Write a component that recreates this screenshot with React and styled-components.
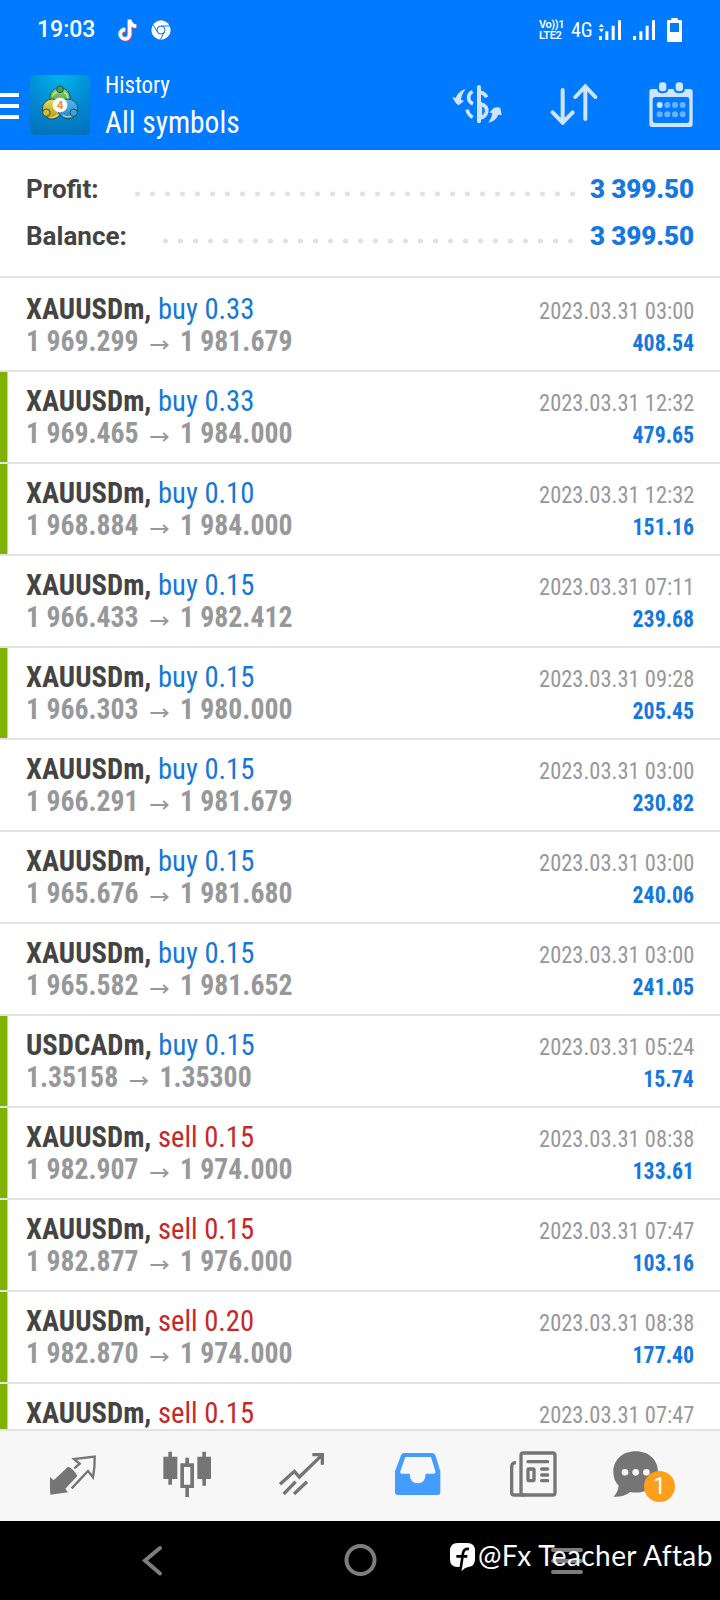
import styled, { createGlobalStyle } from "styled-components"

const GlobalStyle = createGlobalStyle`
* { box-sizing: border-box; }
body {
margin: 0;
background: #fff;
font-family: "Roboto Condensed", Roboto, "Liberation Sans", sans-serif;
}
`

const deals = [
    { symbol: "XAUUSDm", type: "buy", volume: "0.33", open: "1 969.299", close: "1 981.679", date: "2023.03.31 03:00", profit: "408.54" },
    { symbol: "XAUUSDm", type: "buy", volume: "0.33", open: "1 969.465", close: "1 984.000", date: "2023.03.31 12:32", profit: "479.65", marked: true },
    { symbol: "XAUUSDm", type: "buy", volume: "0.10", open: "1 968.884", close: "1 984.000", date: "2023.03.31 12:32", profit: "151.16", marked: true },
    { symbol: "XAUUSDm", type: "buy", volume: "0.15", open: "1 966.433", close: "1 982.412", date: "2023.03.31 07:11", profit: "239.68" },
    { symbol: "XAUUSDm", type: "buy", volume: "0.15", open: "1 966.303", close: "1 980.000", date: "2023.03.31 09:28", profit: "205.45", marked: true },
    { symbol: "XAUUSDm", type: "buy", volume: "0.15", open: "1 966.291", close: "1 981.679", date: "2023.03.31 03:00", profit: "230.82" },
    { symbol: "XAUUSDm", type: "buy", volume: "0.15", open: "1 965.676", close: "1 981.680", date: "2023.03.31 03:00", profit: "240.06" },
    { symbol: "XAUUSDm", type: "buy", volume: "0.15", open: "1 965.582", close: "1 981.652", date: "2023.03.31 03:00", profit: "241.05" },
    { symbol: "USDCADm", type: "buy", volume: "0.15", open: "1.35158", close: "1.35300", date: "2023.03.31 05:24", profit: "15.74", marked: true },
    { symbol: "XAUUSDm", type: "sell", volume: "0.15", open: "1 982.907", close: "1 974.000", date: "2023.03.31 08:38", profit: "133.61", marked: true },
    { symbol: "XAUUSDm", type: "sell", volume: "0.15", open: "1 982.877", close: "1 976.000", date: "2023.03.31 07:47", profit: "103.16", marked: true },
    { symbol: "XAUUSDm", type: "sell", volume: "0.20", open: "1 982.870", close: "1 974.000", date: "2023.03.31 08:38", profit: "177.40", marked: true },
    { symbol: "XAUUSDm", type: "sell", volume: "0.15", date: "2023.03.31 07:47", marked: true },
]

const Screen = styled.div`
width: 720px;
height: 1600px;
display: flex;
flex-direction: column;
overflow: hidden;
background: #fff;
`

const Header = styled.header`
flex: none;
height: 150px;
background: #007aff;
border-bottom: 1px solid #1a6fd0;
color: #fff;
`

const StatusBar = styled.div`
height: 60px;
padding: 0 38px 0 37px;
display: flex;
align-items: center;
font-family: Roboto, sans-serif;
`

const Clock = styled.div`
width: 80px;
font-size: 23px;
font-weight: 500;
line-height: 62px;
`

const StatusIcons = styled.div`
display: flex;
align-items: center;
gap: ${({ $gap }) => $gap}px;
`

const StatusRight = styled(StatusIcons)`
margin-left: auto;
`

const VoLte = styled.div`
display: flex;
flex-direction: column;
font-size: 11px;
line-height: 11px;
font-weight: 600;
white-space: nowrap;
width: 25px;
& span { letter-spacing: -0.4px; }
`

const Network = styled.div`
font-size: 20px;
line-height: 24px;
width: 22px;
margin-left: 7px;
margin-right: 6px;
font-stretch: 75%;
`

const AppBar = styled.div`
height: 89px;
padding: 14px 26px 0 0;
display: flex;
align-items: flex-start;
`

const MenuButton = styled.div`
width: 19px;
margin-top: 19px;
display: flex;
flex-direction: column;
gap: 7px;
& i {
height: 4px;
background: #fff;
}
`

const Logo = styled.div`
width: 60px;
height: 60px;
margin: 1px 15px 0 11px;
border-radius: 5px;
background: radial-gradient(circle at 50% 0, #00b4ea, #0387d0 55%, #036fb8);
`

const Titles = styled.div`
width: 230px;
white-space: nowrap;
font-stretch: 75%;
`

const SmallTitle = styled.div`
font-size: 24px;
line-height: 22px;
transform: scaleX(0.955);
transform-origin: left;
`

const BigTitle = styled.div`
font-size: 32px;
line-height: 52px;
transform: scaleX(0.92);
transform-origin: left;
`

const Actions = styled.div`
margin-left: auto;
display: flex;
align-items: center;
gap: 48px;
height: 60px;
`

const Summary = styled.section`
flex: none;
height: 128px;
padding: 15px 26px 0;
border-bottom: 2px solid #e3e3e3;
`

const SummaryLine = styled.div`
height: 47px;
display: flex;
align-items: center;
font-family: Roboto, sans-serif;
font-size: 26px;
font-weight: 700;
color: #444;
& strong {
width: 104px;
white-space: nowrap;
letter-spacing: -0.1px;
color: #1677e0;
}
`

const Dots = styled.div`
flex: 1;
height: 6px;
margin: 10px 11px 0 36px;
background: radial-gradient(circle at 2.5px 3px, #e2e2e2 2.1px, transparent 2.9px) 0 0 / 15px 6px;
`

const List = styled.main`
flex: 1;
min-height: 0;
overflow: hidden;
`

const Row = styled.article`
height: 92px;
padding: 13px 26px 0;
background:
linear-gradient(#e3e3e3, #e3e3e3) bottom left / 100% 2px no-repeat,
linear-gradient(90deg, ${({ $marked }) => ($marked ? "#7db300 7px, #c3dd85 7px" : "#fff, #fff")}) left / 8px 100% no-repeat;
&:first-child {
height: 94px;
padding-top: 15px;
}
`

const Line = styled.div`
height: 32px;
line-height: 32px;
display: flex;
align-items: baseline;
justify-content: space-between;
white-space: nowrap;
font-stretch: 75%;
`

const Deal = styled.div`
font-size: 29.5px;
color: ${({ $type }) => ($type === "sell" ? "#c62828" : "#1677d8")};
transform: scaleX(0.97);
transform-origin: left;
& b { color: #444; }
`

const Prices = styled.div`
font-size: 29.5px;
font-weight: 700;
color: #97989b;
transform: scaleX(0.94);
transform-origin: left;
& svg { margin: 0 12px; }
`

const DateText = styled.div`
font-size: 24.5px;
color: #97989b;
transform: scaleX(0.917);
transform-origin: right;
`

const Profit = styled.div`
font-size: 24.5px;
font-weight: 700;
color: #1677e0;
transform: scaleX(0.89);
transform-origin: right;
`

const TabBar = styled.nav`
flex: none;
height: 92px;
border-top: 2px solid #e3e3e3;
background: #f7f7f7;
display: grid;
grid-template-columns: 145px 84px 146px 85px 146px 60px;
color: #757575;
& svg { display: block; }
`

const Tab = styled.div`
position: relative;
padding-top: 19px;
display: flex;
justify-content: center;
align-items: flex-start;
`

const Badge = styled.span`
position: absolute;
top: 40px;
left: 38px;
width: 31px;
height: 31px;
border-radius: 50%;
background: #ff9f1c;
color: #fff;
font: 400 23px/32px Roboto, sans-serif;
text-align: center;
`

const SystemBar = styled.footer`
flex: none;
position: relative;
height: 79px;
background: #000;
display: flex;
align-items: center;
& > svg { flex: none; }
`

const Watermark = styled.div`
position: absolute;
left: 450px;
top: 16px;
display: flex;
align-items: center;
gap: 3px;
color: #fff;
font: 400 28px/36px Lato, sans-serif;
letter-spacing: 0.4px;
white-space: nowrap;
& svg { margin-top: 3px; }
`

const TikTok = () => (
    <svg width="21" height="25" viewBox="0 0 63 75">
        <g fill="none" strokeWidth="10">
            <path stroke="#24e6f0" d="M36 4v44a14 14 0 1 1-13-15M37 7c2 11 8 16 18 18" />
            <path stroke="#f7345c" d="M41 8v44a14 14 0 1 1-13-14M42 10c2 11 9 16 19 16" />
            <path stroke="#fff" strokeWidth="11" d="M38 5v45a14 14 0 1 1-13-15M39 8c2 11 9 16 19 17" />
        </g>
    </svg>
)

const Chrome = () => (
    <svg width="20" height="20" viewBox="0 0 60 60">
        <circle cx="30" cy="30" r="29" fill="#fff" />
        <g fill="none" stroke="#007aff" strokeWidth="3">
            <circle cx="30" cy="30" r="12" />
            <path d="M30 18h27M20 37L6 14M40 36L28 59" />
        </g>
    </svg>
)

const Signal = ({ data }) => (
    <svg width="22" height="20" viewBox="0 0 66 60" fill="#fff">
        <path d="M0 48h9v12H0zM19 34h9v26h-9zM38 17h9v43h-9zM57 1h9v59h-9z" />
        {data && <path d="M7 11l8 10H-1zM7 37l8-11H-1z" />}
    </svg>
)

const Battery = () => (
    <svg width="15" height="24" viewBox="0 0 45 72">
        <path fill="#fff" fillRule="evenodd" d="M13 0h19v6h9q4 0 4 4v58q0 4-4 4H4q-4 0-4-4V10q0-4 4-4h9zM9 15v27h27V15z" />
    </svg>
)

const LogoMark = () => (
    <svg width="60" height="60" viewBox="0 0 180 180">
        <defs>
            <linearGradient id="green" x2="0" y2="1"><stop stopColor="#9ed86c" /><stop offset="1" stopColor="#2f8f3c" /></linearGradient>
            <linearGradient id="gold" x2="0" y2="1"><stop stopColor="#e6dc62" /><stop offset="1" stopColor="#b99418" /></linearGradient>
            <linearGradient id="sky" x2="0" y2="1"><stop stopColor="#57b9ee" /><stop offset="1" stopColor="#2383cf" /></linearGradient>
        </defs>
        <g stroke="#1c5560" strokeWidth="3">
            <circle cx="90" cy="69" r="31" fill="url(#green)" />
            <circle cx="67" cy="102" r="30" fill="url(#gold)" />
            <circle cx="114" cy="102" r="30" fill="url(#sky)" />
            <circle cx="90" cy="43" r="10" fill="#4ba33c" />
            <circle cx="49" cy="113" r="11" fill="#d4bd35" />
            <circle cx="131" cy="113" r="11" fill="#3ca0e0" />
        </g>
        <path d="M68 64q5-12 14-12M103 52q10 6 11 18M58 127q17 3 25-8M98 120q13 9 26 3" stroke="#e9f5cf" strokeWidth="4" fill="none" opacity=".7" />
        <circle cx="90" cy="90" r="22" fill="#fff" stroke="#d9d6c8" strokeWidth="1" />
        <text x="90" y="102" textAnchor="middle" fontFamily="Roboto" fontWeight="700" fontSize="35" fill="#f08a3c">4</text>
    </svg>
)

const CurrencyIcon = () => (
    <svg width="50" height="40" viewBox="96 252 150 120" fill="none" stroke="#cfe4ff" strokeWidth="11">
        <path strokeWidth="12" strokeLinecap="round" d="M177 261v103" />
        <path d="M181 277q13 2 19 15M158 275q-12 5-12 18t13 18M141 329q4 16 17 23M181 311q22 6 19 24-3 15-19 19M181 315v36" />
        <path fill="#cfe4ff" stroke="none" d="M97 290l10 4q8-21 30-27-13 17-14 32l9 4-16 13q-12-8-19-26zM245 346l-4-23q-12-4-21 2l-12 13 9 1q-2 17-13 29 24-5 31-24z" />
    </svg>
)

const SortIcon = () => (
    <svg width="50" height="42" viewBox="390 249 150 126" fill="none" stroke="#cfe4ff" strokeWidth="12" strokeLinecap="round">
        <path d="M428 270v98M398 337l30 31 30-31M496 357v-97M466 291l30-32 30 32" />
    </svg>
)

const CalendarIcon = () => (
    <svg width="46" height="47" viewBox="684 240 138 141" fill="#cfe4ff">
        <path fillRule="evenodd" d="M696 264h15q1 13 17 13t17-13h16q1 13 17 13t17-13h15q8 0 8 8v98q0 8-8 8H696q-8 0-8-8v-98q0-8 8-8zM706 288q-8 0-8 8v61q0 9 8 9h94q8 0 8-9v-61q0-8-8-8z" />
        <rect x="717" y="244" width="22" height="27" rx="9" />
        <rect x="767" y="244" width="22" height="27" rx="9" />
        <circle cx="719" cy="312" r="9" />
        <g fill="#6db2ff">
            <circle cx="742" cy="312" r="9" /><circle cx="765" cy="312" r="9" /><circle cx="788" cy="312" r="9" />
            <circle cx="719" cy="340" r="9" /><circle cx="742" cy="340" r="9" /><circle cx="765" cy="340" r="9" /><circle cx="788" cy="340" r="9" />
        </g>
    </svg>
)

const PriceArrow = () => (
    <svg width="20" height="12" viewBox="0 0 60 36">
        <path d="M1 18h55M42 6l14 12-14 12" fill="none" stroke="#97989b" strokeWidth="6" />
    </svg>
)

const QuotesIcon = () => (
    <svg width="48" height="48" viewBox="146 90 144 144">
        <path fill="currentColor" d="M149 171l11 10 43-41q17 6 28 28l-36 38 8 11-53 7q-2-26-1-53z" />
        <path fill="none" stroke="currentColor" strokeWidth="7" d="M222 145l16-14-17-14 62-7q1 31-5 62l-15-19-49 52" />
    </svg>
)

const ChartIcon = () => (
    <svg width="48" height="48" viewBox="490 90 144 144" fill="currentColor">
        <path d="M506 95h11v15h16v67h-16v17h-11v-17h-15v-67h15zM608 95h11v15h15v67h-15v20h-11v-20h-15v-67h15z" />
        <path fillRule="evenodd" d="M557 113h11v17h15v74h-15v27h-11v-27h-15v-74h15zM553 141v53h19v-53z" />
    </svg>
)

const TradeIcon = () => (
    <svg width="48" height="48" viewBox="836 90 144 144" fill="none" stroke="currentColor" strokeWidth="10">
        <path d="M842 193l43-39 15 17 67-65M939 104h30v30M853 222l36-37M884 222l39-37" />
    </svg>
)

const HistoryIcon = () => (
    <svg width="48" height="48" viewBox="101 90 144 144" fill="#449cff">
        <path fillRule="evenodd" d="M131 99h84q7 0 10 7l15 48v63q0 8-8 8H112q-8 0-8-8v-63l18-48q3-7 9-7zM135 111l-15 43q-2 7 5 7h23q1 29 24 29t24-29h23q8 0 6-7l-13-43z" />
    </svg>
)

const NewsIcon = () => (
    <svg width="48" height="48" viewBox="447 90 144 144" fill="none" stroke="currentColor" strokeWidth="10">
        <rect x="483" y="99" width="102" height="126" rx="7" />
        <path d="M468 128q-13 0-13 12v78q0 7 8 7h30" />
        <path strokeLinecap="round" d="M504 125h59M545 147h18M545 165h18M545 182h18" />
        <rect x="504" y="147" width="18" height="35" rx="2" />
    </svg>
)

const ChatIcon = () => (
    <svg width="48" height="48" viewBox="757 90 144 144" fill="currentColor">
        <path d="M828 94c39 0 67 26 67 61 0 41-34 70-83 61-16 12-32 15-50 14 7-8 14-19 15-33-11-11-16-25-16-42 0-35 28-61 67-61z" />
        <g fill="#f7f7f7"><circle cx="796" cy="157" r="10" /><circle cx="828" cy="157" r="10" /><circle cx="860" cy="157" r="10" /></g>
    </svg>
)

const SystemIcons = () => (
    <svg width="720" height="79" viewBox="0 0 720 79" fill="none" stroke="#7d7d7d" strokeWidth="4" strokeLinecap="round">
        <path d="M160 27l-15 12.500 15 13" />
        <circle cx="360.500" cy="39" r="14" />
        <path d="M553 29h28M553 40h28M553 51h28" />
    </svg>
)

const PageMark = () => (
    <svg width="25" height="28" viewBox="0 0 75 84">
        <path fill="#fff" d="M23 0h29q23 0 23 24v25q0 21-20 23-11 1-20 12V72H23Q0 72 0 49V24Q0 0 23 0z" />
        <path fill="none" stroke="#000" strokeWidth="8" d="M57 18q-15-3-18 13l-7 46M19 40h33" />
    </svg>
)

const DealRow = ({ symbol, type, volume, open, close, date, profit, marked }) => {

    return (
        <Row $marked={marked}>
            <Line>
                <Deal $type={type}><b>{symbol},</b> {type} {volume}</Deal>
                <DateText>{date}</DateText>
            </Line>
            {open && (
                <Line>
                    <Prices>{open}<PriceArrow />{close}</Prices>
                    <Profit>{profit}</Profit>
                </Line>
            )}
        </Row>
    )
}

export default function App() {

    return (
        <Screen>
            <GlobalStyle />
            <Header>
                <StatusBar>
                    <Clock>19:03</Clock>
                    <StatusIcons $gap={13}>
                        <TikTok />
                        <Chrome />
                    </StatusIcons>
                    <StatusRight $gap={0}>
                        <VoLte><span>Vo))1</span><span>LTE2</span></VoLte>
                        <Network>4G</Network>
                        <StatusIcons $gap={12}>
                            <Signal data />
                            <Signal />
                            <Battery />
                        </StatusIcons>
                    </StatusRight>
                </StatusBar>
                <AppBar>
                    <MenuButton><i /><i /><i /></MenuButton>
                    <Logo><LogoMark /></Logo>
                    <Titles>
                        <SmallTitle>History</SmallTitle>
                        <BigTitle>All symbols</BigTitle>
                    </Titles>
                    <Actions>
                        <CurrencyIcon />
                        <SortIcon />
                        <CalendarIcon />
                    </Actions>
                </AppBar>
            </Header>
            <Summary>
                <SummaryLine>Profit:<Dots /><strong>3 399.50</strong></SummaryLine>
                <SummaryLine>Balance:<Dots /><strong>3 399.50</strong></SummaryLine>
            </Summary>
            <List>
                {deals.map((deal, index) => <DealRow key={index} {...deal} />)}
            </List>
            <TabBar>
                <Tab><QuotesIcon /></Tab>
                <Tab><ChartIcon /></Tab>
                <Tab><TradeIcon /></Tab>
                <Tab><HistoryIcon /></Tab>
                <Tab><NewsIcon /></Tab>
                <Tab><ChatIcon /><Badge>1</Badge></Tab>
            </TabBar>
            <SystemBar>
                <SystemIcons />
                <Watermark><PageMark />@Fx Teacher Aftab</Watermark>
            </SystemBar>
        </Screen>
    )
}
